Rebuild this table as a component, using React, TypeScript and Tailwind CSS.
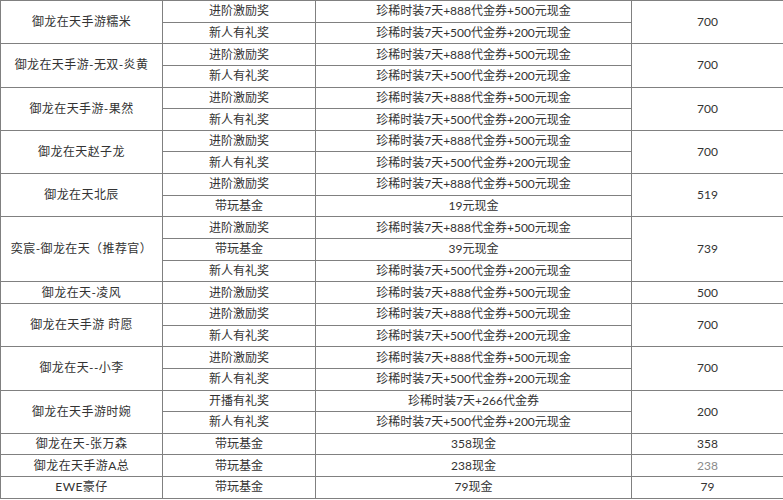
const A = "珍稀时装7天+888代金券+500元现金";
const B = "珍稀时装7天+500代金券+200元现金";

const groups: { name: string; total: string; rows: [string, string][]; light?: boolean }[] = [
  { name: "御龙在天手游糯米", total: "700", rows: [["进阶激励奖", A], ["新人有礼奖", B]] },
  { name: "御龙在天手游-无双-炎黄", total: "700", rows: [["进阶激励奖", A], ["新人有礼奖", B]] },
  { name: "御龙在天手游-果然", total: "700", rows: [["进阶激励奖", A], ["新人有礼奖", B]] },
  { name: "御龙在天赵子龙", total: "700", rows: [["进阶激励奖", A], ["新人有礼奖", B]] },
  { name: "御龙在天北辰", total: "519", rows: [["进阶激励奖", A], ["带玩基金", "19元现金"]] },
  {
    name: "奕宸-御龙在天（推荐官）",
    total: "739",
    rows: [["进阶激励奖", A], ["带玩基金", "39元现金"], ["新人有礼奖", B]],
  },
  { name: "御龙在天-凌风", total: "500", rows: [["进阶激励奖", A]] },
  { name: "御龙在天手游 莳愿", total: "700", rows: [["进阶激励奖", A], ["新人有礼奖", B]] },
  { name: "御龙在天--小李", total: "700", rows: [["进阶激励奖", A], ["新人有礼奖", B]] },
  { name: "御龙在天手游时婉", total: "200", rows: [["开播有礼奖", "珍稀时装7天+266代金券"], ["新人有礼奖", B]] },
  { name: "御龙在天-张万森", total: "358", rows: [["带玩基金", "358现金"]] },
  { name: "御龙在天手游A总", total: "238", rows: [["带玩基金", "238现金"]], light: true },
  { name: "EWE豪仔", total: "79", rows: [["带玩基金", "79现金"]] },
];

const cell = "border border-[#808080] text-center align-middle p-0 leading-none";

export default function App() {
  return (
    <div
      className="w-[783px] h-[500px] bg-white text-[#333333] text-[12px] overflow-hidden"
      style={{ fontFamily: 'Lato, "Noto Sans CJK SC", sans-serif' }}
    >
      <table className="w-[783px] table-fixed border-collapse">
        <colgroup>
          <col className="w-[162px]" />
          <col className="w-[153px]" />
          <col className="w-[316px]" />
          <col className="w-[152px]" />
        </colgroup>
        <tbody>
          {groups.map((g) =>
            g.rows.map((r, i) => (
              <tr key={g.name + i} className="h-[21.65px]">
                {i === 0 && (
                  <td rowSpan={g.rows.length} className={cell + " tracking-[0.4px]"}>
                    {g.name}
                  </td>
                )}
                <td className={cell}>{r[0]}</td>
                <td className={cell}>{r[1]}</td>
                {i === 0 && (
                  <td
                    rowSpan={g.rows.length}
                    className={cell + (g.light ? " text-[#8a8a8a]" : "")}
                  >
                    {g.total}
                  </td>
                )}
              </tr>
            ))
          )}
        </tbody>
      </table>
    </div>
  );
}
